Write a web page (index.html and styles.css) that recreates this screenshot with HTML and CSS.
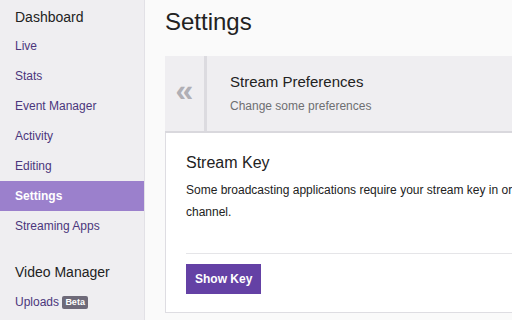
FILE: index.html
```html
<!DOCTYPE html>
<html lang="en">
<head>
    <meta charset="UTF-8">
    <title>Settings</title>
    <link rel="stylesheet" href="styles.css">
</head>
<body>
    <div class="layout">
        <nav class="sidebar">
            <h3 class="nav-heading">Dashboard</h3>
            <a class="nav-link" href="#">Live</a>
            <a class="nav-link" href="#">Stats</a>
            <a class="nav-link" href="#">Event Manager</a>
            <a class="nav-link" href="#">Activity</a>
            <a class="nav-link" href="#">Editing</a>
            <a class="nav-link active" href="#">Settings</a>
            <a class="nav-link" href="#">Streaming Apps</a>
            <h3 class="nav-heading video">Video Manager</h3>
            <a class="nav-link" href="#">Uploads <span class="badge">Beta</span></a>
        </nav>

        <main class="content">
            <h1 class="page-title">Settings</h1>

            <div class="pref-bar">
                <div class="pref-back">&laquo;</div>
                <div class="pref-text">
                    <div class="pref-title">Stream Preferences</div>
                    <div class="pref-sub">Change some preferences</div>
                </div>
            </div>

            <div class="card">
                <h2 class="card-title">Stream Key</h2>
                <p class="card-text">Some broadcasting applications require your stream key in order to broadcast to your channel.</p>
                <div class="card-actions">
                    <button class="btn">Show Key</button>
                </div>
            </div>
        </main>
    </div>
</body>
</html>
```

FILE: styles.css
```css
body {
    margin: 0;
    font-family: "Liberation Sans", Arial, sans-serif;
    background-color: #fafafa;
    color: #222;
    overflow: hidden;
}
.layout {
    display: flex;
    height: 320px;
}
.sidebar {
    width: 144px;
    flex-shrink: 0;
    background-color: #efeef1;
    border-right: 1px solid #e2e1e6;
    display: flex;
    flex-direction: column;
}
.nav-heading {
    margin: 0;
    font-size: 14px;
    font-weight: normal;
    color: #222;
    padding: 8px 15px 0;
    height: 23px;
    line-height: 18px;
}
.nav-heading.video {
    margin-top: 14px;
    height: 24px;
}
.nav-link {
    display: block;
    height: 30px;
    line-height: 30px;
    padding: 0 15px;
    font-size: 12px;
    color: #4b367c;
    text-decoration: none;
}
.nav-link.active {
    background-color: #9b80cc;
    color: #fff;
    font-weight: bold;
}
.badge {
    display: inline-block;
    background-color: #6e6a79;
    color: #fff;
    font-size: 9px;
    font-weight: bold;
    line-height: 13px;
    padding: 0 3px;
    border-radius: 2px;
    vertical-align: 1px;
}
.content {
    flex: 1;
    padding: 0 0 0 20px;
    overflow: hidden;
}
.page-title {
    margin: 0;
    font-size: 24px;
    font-weight: normal;
    line-height: 24px;
    padding-top: 10px;
    height: 46px;
}
.pref-bar {
    display: flex;
    height: 75px;
    background-color: #efeef1;
    border-bottom: 2px solid #d9d8dd;
    width: 540px;
}
.pref-back {
    width: 42px;
    border-right: 3px solid #dcdbe0;
    display: flex;
    align-items: center;
    justify-content: center;
    font-size: 32px;
    font-weight: bold;
    color: #b0afb5;
    padding-bottom: 6px;
    box-sizing: border-box;
}
.pref-text {
    padding: 16px 0 0 23px;
}
.pref-title {
    font-size: 15px;
    line-height: 20px;
    color: #222;
}
.pref-sub {
    font-size: 12px;
    color: #6e6e72;
    margin-top: 7px;
}
.card {
    background-color: #fff;
    border: 1px solid #dedde2;
    border-top: none;
    width: 540px;
    height: 180px;
    padding: 19px 20px 0;
    box-sizing: border-box;
}
.card-title {
    margin: 0;
    font-size: 16px;
    font-weight: normal;
    line-height: 22px;
}
.card-text {
    margin: 5px 0 0;
    font-size: 12px;
    line-height: 22px;
    max-width: 490px;
}
.card-actions {
    margin-top: 30px;
    border-top: 1px solid #e5e5e8;
    padding-top: 10px;
}
.btn {
    background-color: #6441a5;
    color: #fff;
    border: none;
    font-family: inherit;
    font-size: 12px;
    font-weight: bold;
    height: 30px;
    padding: 0 9px;
    cursor: pointer;
}
```
